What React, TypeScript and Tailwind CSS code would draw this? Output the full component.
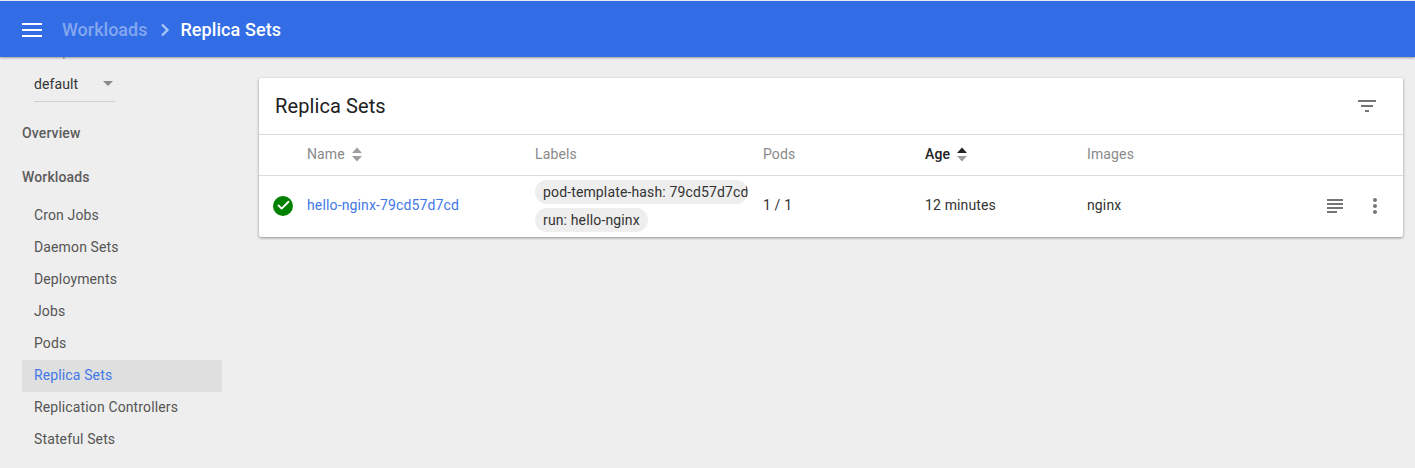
import { Check } from 'lucide-react';

const workloads = [
  'Cron Jobs',
  'Daemon Sets',
  'Deployments',
  'Jobs',
  'Pods',
  'Replica Sets',
  'Replication Controllers',
  'Stateful Sets',
];

function SortArrows({ active }: { active?: boolean }) {
  return (
    <svg width="10" height="15" viewBox="0 0 10 15" className="ml-[7px]">
      <path d="M0 6 L5 0.5 L10 6 Z" fill={active ? '#212121' : '#9e9e9e'} />
      <path d="M0 9 L5 14.5 L10 9 Z" fill="#9e9e9e" />
    </svg>
  );
}

function NavItem({ label, active }: { label: string; active?: boolean }) {
  return (
    <div
      className={`h-8 flex items-center pl-3 pb-[2px] rounded-[2px] text-[14px] tracking-[0.13px] ${
        active ? 'bg-[#dfdfdf] text-[#4278e8]' : 'text-[#555555]'
      }`}
    >
      {label}
    </div>
  );
}

function Chip({ children, flush }: { children: string; flush?: boolean }) {
  return (
    <div
      className={`h-6 w-fit max-w-[213px] overflow-hidden whitespace-nowrap rounded-[12px] bg-[#eeeeee] pl-2 text-[14px] leading-6 tracking-[0.14px] text-[#333333] ${
        flush ? 'pr-0' : 'pr-2'
      }`}
    >
      {children}
    </div>
  );
}

export default function App() {
  return (
    <div className="h-[468px] w-[1415px] overflow-hidden flex flex-col bg-[#eeeeee] font-['Roboto',sans-serif]">
      <header className="relative z-10 h-[56px] shrink-0 mt-px bg-[#326de6] shadow-[0_1px_2px_rgba(0,0,0,0.35)] flex items-center pl-[22px]">
        <svg width="20" height="14" viewBox="0 0 20 14" className="mr-5 mt-[2px]">
          <path d="M0 1h20M0 7h20M0 13h20" stroke="#fff" strokeWidth="2" />
        </svg>
        <span className="text-[18px] font-medium text-[#84a7f0]">Workloads</span>
        <svg width="10" height="14" viewBox="0 0 10 14" className="ml-[13px] mr-[10px] mt-[2px]">
          <path d="M2 1.5 L7.5 7 L2 12.5" fill="none" stroke="#a9c3f4" strokeWidth="2.4" />
        </svg>
        <span className="text-[18px] font-medium tracking-[0.08px] text-white">Replica Sets</span>
      </header>

      <div className="flex flex-1 min-h-0">
        <aside className="w-[222px] shrink-0 pl-[22px]">
          <div className="ml-3 -mt-[9px] h-3 text-[9px] leading-3 text-[#757575]">Namespace</div>
          <div className="ml-3 w-[81px] h-[42px] border-b border-[#d0d0d0] flex items-center justify-between text-[14px] text-[#333333] pt-[7px]">
            <span className="tracking-[0.1px]">default</span>
            <svg width="10" height="5" viewBox="0 0 10 5" className="mr-[2px] mb-[1px]">
              <path d="M0 0h10L5 5z" fill="#8a8a8a" />
            </svg>
          </div>
          <div className="mt-[21px] h-5 flex items-center text-[14px] font-medium tracking-[0.13px] text-[#5c5c5c]">
            Overview
          </div>
          <div className="mt-6 h-5 flex items-center text-[14px] font-medium tracking-[0.13px] text-[#5c5c5c]">
            Workloads
          </div>
          <nav className="mt-[13px]">
            {workloads.map((w) => (
              <NavItem key={w} label={w} active={w === 'Replica Sets'} />
            ))}
          </nav>
        </aside>

        <main className="flex-1 pl-[37px] pr-[12px] pt-[21px]">
          <section className="bg-white rounded-[2px] shadow-[0_1px_3px_rgba(0,0,0,0.4)]">
            <div className="h-[57px] flex items-center justify-between pl-[16px] pr-[24px] border-b border-[#dcdcdc]">
              <h1 className="text-[20px] tracking-[0.1px] text-[#212121]">Replica Sets</h1>
              <svg width="24" height="24" viewBox="0 0 24 24" fill="#757575">
                <path d="M10 18h4v-2h-4v2zM3 6v2h18V6H3zm3 7h12v-2H6v2z" />
              </svg>
            </div>

            <div className="grid grid-cols-[48px_228px_228px_162px_162px_1fr] h-[41px] items-center border-b border-[#dcdcdc] pb-[2px] text-[14px] tracking-[0.13px] text-[#8a8a8a]">
              <div />
              <div className="flex items-center">
                Name
                <SortArrows />
              </div>
              <div>Labels</div>
              <div>Pods</div>
              <div className="flex items-center font-medium text-[#212121]">
                Age
                <SortArrows active />
              </div>
              <div>Images</div>
            </div>

            <div className="grid grid-cols-[48px_228px_228px_162px_162px_1fr] h-[61px] items-center pb-[2px] text-[14px] tracking-[0.14px] text-[#333333]">
              <div className="flex justify-center">
                <div className="w-5 h-5 rounded-full bg-[#008000] flex items-center justify-center">
                  <Check size={15} strokeWidth={3} className="text-white" />
                </div>
              </div>
              <div className="text-[#4278e8]">hello-nginx-79cd57d7cd</div>
              <div className="flex flex-col gap-1 pt-[1px]">
                <Chip flush>pod-template-hash: 79cd57d7cd</Chip>
                <Chip>run: hello-nginx</Chip>
              </div>
              <div>1 / 1</div>
              <div>12 minutes</div>
              <div className="flex items-center justify-between pr-4">
                <span>nginx</span>
                <div className="flex items-center gap-4">
                  <svg width="24" height="24" viewBox="0 0 24 24" fill="#757575">
                    <path d="M14 17H4v2h10v-2zm6-8H4v2h16V9zM4 15h16v-2H4v2zM4 5v2h16V5H4z" />
                  </svg>
                  <svg width="24" height="24" viewBox="0 0 24 24" fill="#757575">
                    <path d="M12 8c1.1 0 2-.9 2-2s-.9-2-2-2-2 .9-2 2 .9 2 2 2zm0 2c-1.1 0-2 .9-2 2s.9 2 2 2 2-.9 2-2-.9-2-2-2zm0 6c-1.1 0-2 .9-2 2s.9 2 2 2 2-.9 2-2-.9-2-2-2z" />
                  </svg>
                </div>
              </div>
            </div>
          </section>
        </main>
      </div>
    </div>
  );
}
